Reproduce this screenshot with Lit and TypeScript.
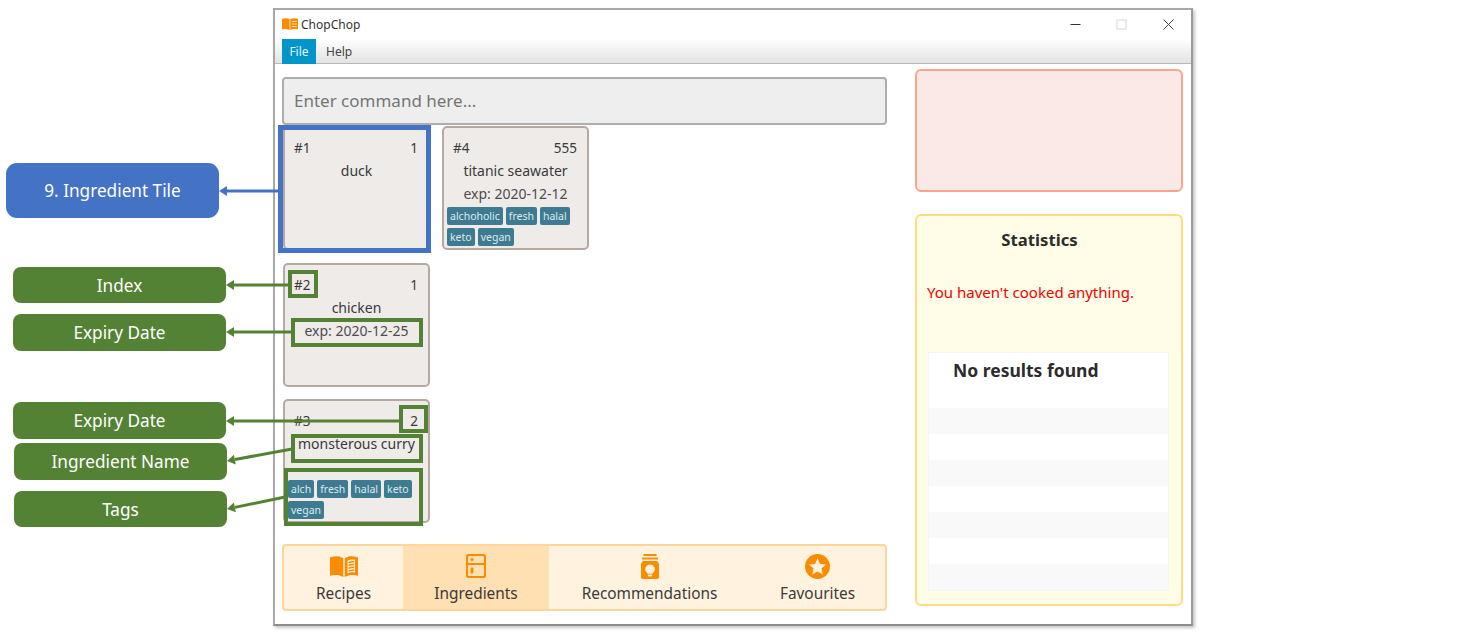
import { LitElement, html, css, svg } from "lit";
import { customElement } from "lit/decorators.js";

const bookIcon = (w: number, h: number) => html`<svg width=${w} height=${h} viewBox="0 0 28 21">
  <path fill="#fb8c00" d="M0 1.600C4.500-.4 9.500-.4 13.300 2.200V21C9.500 18.600 4.500 18.400 0 19.800Z"/>
  <path fill="#fb8c00" d="M14.700 2.200C18.500-.4 23.500-.4 28 1.600V19.800C23.500 18.400 18.500 18.600 14.700 21Z"/>
  <path fill="#fff3e0" d="M17.500 4.800C19.500 3.600 22.500 3.400 25 3.800V16.400C22.500 16 19.500 16.400 17.500 17.400Z"/>
  <path stroke="#fb8c00" stroke-width="1.500" fill="none" d="M18.500 6.800C20.500 5.800 22.200 5.600 24.200 5.800M18.500 9.600C20.500 8.600 22.200 8.400 24.200 8.600M18.500 12.400C20.500 11.400 22.200 11.200 24.200 11.400M18.500 15.200C20.500 14.200 22.200 14 24.200 14.200"/>
</svg>`;

const fridgeIcon = html`<svg width="20" height="24" viewBox="0 0 20 24">
  <rect width="20" height="24" rx="2.500" fill="#fb8c00"/>
  <rect x="2" y="2" width="16" height="7" rx="1" fill="#ffe0b2"/>
  <rect x="2" y="11" width="16" height="11" rx="1" fill="#ffe0b2"/>
  <circle cx="6" cy="5.500" r="1.600" fill="#fb8c00"/>
  <rect x="4.600" y="13.500" width="2.800" height="6" rx="1" fill="#fb8c00"/>
</svg>`;

const jarIcon = html`<svg width="18" height="25" viewBox="0 0 18 25">
  <rect x="2.500" width="13" height="2" fill="#fb8c00"/>
  <rect x="1" y="3.500" width="16" height="2" fill="#fb8c00"/>
  <path fill="#fb8c00" d="M2 7H16L18 9.500V23A2 2 0 0 1 16 25H2A2 2 0 0 1 0 23V9.500Z"/>
  <path fill="#fff3e0" d="M9 10.500A4.800 4.800 0 0 1 13.800 15.300C13.800 17.400 12.300 18.300 11.300 19.800H6.700C5.700 18.300 4.200 17.400 4.200 15.300A4.800 4.800 0 0 1 9 10.500Z"/>
  <rect x="7" y="20.600" width="4" height="1.800" fill="#fff3e0"/>
</svg>`;

const starIcon = html`<svg width="25" height="25" viewBox="0 0 25 25">
  <circle cx="12.500" cy="12.500" r="12.500" fill="#fb8c00"/>
  <path fill="#fff3e0" d="M12.500 4.400L15 10 21 10.600 16.500 14.600 17.800 20.600 12.500 17.500 7.200 20.600 8.500 14.600 4 10.600 10 10Z"/>
</svg>`;

interface Tile { idx: string; qty: string; name: string; exp?: string; tags?: string[]; }
const tiles: Tile[] = [
  { idx: "#1", qty: "1", name: "duck" },
  { idx: "#2", qty: "1", name: "chicken", exp: "exp: 2020-12-25" },
  { idx: "#3", qty: "2", name: "monsterous curry", tags: ["alch", "fresh", "halal", "keto", "vegan"] },
  { idx: "#4", qty: "555", name: "titanic seawater", exp: "exp: 2020-12-12", tags: ["alchoholic", "fresh", "halal", "keto", "vegan"] },
];

const tabs = [
  { label: "Recipes", icon: bookIcon(28, 21), active: false },
  { label: "Ingredients", icon: fridgeIcon, active: true },
  { label: "Recommendations", icon: jarIcon, active: false },
  { label: "Favourites", icon: starIcon, active: false },
];

const arrow = (x1: number, y1: number, x2: number, y2: number, color: string) => {
  const a = Math.atan2(y2 - y1, x2 - x1);
  const L = 8, W = 5;
  const bx = x2 - L * Math.cos(a), by = y2 - L * Math.sin(a);
  const nx = -Math.sin(a) * W, ny = Math.cos(a) * W;
  return svg`<line x1=${x1} y1=${y1} x2=${bx} y2=${by} stroke=${color} stroke-width="3"/>
    <polygon fill=${color} points="${x2},${y2} ${bx + nx},${by + ny} ${bx - nx},${by - ny}"/>`;
};
const box = (x1: number, y1: number, x2: number, y2: number, color: string, w: number) =>
  svg`<rect x=${x1 + w / 2} y=${y1 + w / 2} width=${x2 - x1 - w} height=${y2 - y1 - w} fill="none" stroke=${color} stroke-width=${w}/>`;

@customElement("app-root")
export class AppRoot extends LitElement {
  static styles = css`
    :host {
      display: flex;
      position: relative;
      width: 1468px;
      height: 634px;
      box-sizing: border-box;
      padding-top: 8px;
      background: #fff;
      overflow: hidden;
      font-family: "Noto Sans", "Open Sans", sans-serif;
      color: #3a3a3a;
    }
    .rail { width: 273px; flex: none; display: flex; flex-direction: column; }
    .callout {
      display: flex; align-items: center; justify-content: center;
      width: 213px; color: #fff; font-size: 17.2px; border-radius: 8px;
      background: #548235; margin-left: 13px; box-sizing: border-box;
    }
    .blue { background: #4472c4; margin: 155px 0 0 6px; height: 55px; border-radius: 11px; padding-bottom: 1px; }
    .c-index { margin-top: 49px; height: 36px; }
    .c-exp { margin-top: 11px; height: 37px; }
    .c-exp2 { margin-top: 51px; height: 37px; }
    .c-name { margin: 4px 0 0 14px; height: 37px; }
    .c-tags { margin: 11px 0 0 14px; height: 36px; }

    .window {
      width: 920px; height: 618px; flex: none; box-sizing: border-box;
      border: 2px solid #a8a8a8; border-bottom-color: #8c8c8c; border-right-color: #9a9a9a;
      box-shadow: 2px 2px 3px rgba(0,0,0,.22);
      display: flex; flex-direction: column; background: #fff;
    }
    .titlebar { height: 30px; flex: none; box-sizing: border-box; padding: 0 0 2px 7px; display: flex; align-items: center; font-size: 12px; color: #333; }
    .titlebar svg.logo { margin-right: 3px; }
    .controls { margin-left: auto; display: flex; align-items: center; }
    .ctl { width: 46px; display: flex; justify-content: center; }
    .ctl.close { margin-left: 1px; }
    .menubar {
      height: 24px; flex: none; box-sizing: border-box; display: flex; padding-left: 7px;
      background: linear-gradient(#fdfdfd, #e3e3e3); border-bottom: 1px solid #b8b8b8;
      font-size: 12px; color: #444;
    }
    .menu { display: flex; align-items: center; padding: 0 10px; }
    .menu.on { background: #0096c9; color: #e6f5fb; width: 34px; padding: 0; margin: -1px 0 -1px; box-sizing: border-box; justify-content: center; }
    .body { flex: 1; display: flex; min-height: 0; }
    .left { width: 612px; flex: none; box-sizing: border-box; padding: 13px 0 13px 7px; display: flex; flex-direction: column; }
    .cmd {
      height: 48px; flex: none; box-sizing: border-box; background: #eee; border: 2px solid #adadad;
      border-radius: 4px; padding: 0 0 1px 10px; display: flex; align-items: center;
      font-size: 17px; color: #757575;
    }
    .grid {
      flex: 1; margin: 1px 0 0 1px; display: grid; grid-auto-flow: column;
      grid-template-rows: repeat(3, 124px); grid-auto-columns: 147px; gap: 12.5px 12px; align-content: start;
    }
    .tile {
      box-sizing: border-box; background: #efebe9; border: 2px solid #b8a8a2; border-radius: 5px;
      padding: 0 3px; display: flex; flex-direction: column;
    }
    .head { display: flex; justify-content: space-between; padding: 10px 7px 0 6px; height: 20px; line-height: 20px; font-size: 13.5px; }
    .name { height: 23px; padding-top: 1px; line-height: 23px; text-align: center; font-size: 14px; white-space: nowrap; }
    .exp { height: 24px; margin-bottom: 1px; line-height: 24px; text-align: center; font-size: 14px; color: #4c4c4c; white-space: nowrap; }
    .tags { display: flex; flex-wrap: wrap; gap: 3px; }
    .tag {
      height: 18px; line-height: 18px; padding: 0 3px; background: #3e7b91; color: #dce9ee;
      font-size: 10.5px; border-radius: 2px; white-space: nowrap;
    }
    .tabbar {
      height: 67px; flex: none; box-sizing: border-box; border: 2px solid #ffd699; border-radius: 4px;
      background: #fff3e0; display: grid; grid-template-columns: 119px 146px 201px 1fr; overflow: hidden;
    }
    .tab { display: flex; flex-direction: column; align-items: center; padding-top: 7px; }
    .tab.on { background: #ffe0b2; }
    .ico { height: 26px; display: flex; align-items: center; justify-content: center; }
    .lbl { margin-top: 4px; font-size: 15.4px; line-height: 22px; white-space: nowrap; color: #3a3a3a; }
    .right { width: 268px; flex: none; margin-left: 28px; padding-top: 5px; display: flex; flex-direction: column; }
    .alert { height: 123px; box-sizing: border-box; background: #fbe9e7; border: 2px solid #ffa48c; border-radius: 6px; }
    .stats {
      margin-top: 22px; height: 392px; box-sizing: border-box; background: #fffde7; border: 2px solid #ffdb82;
      border-radius: 6px; padding: 12px 12px 0 11px; display: flex; flex-direction: column;
    }
    .stitle { padding-right: 18px; text-align: center; font-weight: 700; font-size: 16.7px; line-height: 24px; color: #2c2c2c; }
    .msg { margin-top: 28px; height: 24px; line-height: 24px; font-size: 15px; color: #f40000; white-space: nowrap; margin-left: -1px; }
    .list { margin-top: 48px; width: 241px; border: 1px solid #f5f5f5; box-sizing: border-box; background: #fff; }
    .r0 { height: 55px; padding-left: 24px; font-weight: 700; font-size: 17.5px; line-height: 34px; color: #2c2c2c; white-space: nowrap; }
    .r { height: 26px; background: #fff; }
    .r.alt { background: #f9f9f9; }
    .overlay { position: absolute; left: 0; top: 0; pointer-events: none; }
  `;

  render() {
    return html`
      <div class="rail">
        <div class="callout blue">9. Ingredient Tile</div>
        <div class="callout c-index">Index</div>
        <div class="callout c-exp">Expiry Date</div>
        <div class="callout c-exp2">Expiry Date</div>
        <div class="callout c-name">Ingredient Name</div>
        <div class="callout c-tags">Tags</div>
      </div>
      <div class="window">
        <div class="titlebar">
          <svg class="logo" width="16" height="12" viewBox="0 0 16 12">
            <path fill="#fb8c00" d="M0 .8C3-.2 5.500 0 7.600 1V12C5.500 11 3 10.800 0 11.500Z"/>
            <path fill="#fb8c00" d="M8.300 1C10.500 0 13-.2 16 .8V11.500C13 10.800 10.500 11 8.300 12Z"/>
            <path stroke="#ffe0b2" stroke-width="1" fill="none" d="M10 3.500H14.500M10 6H14.500M10 8.500H14.500"/>
          </svg>
          ChopChop
          <div class="controls">
            <div class="ctl"><svg width="11" height="11" viewBox="0 0 11 11"><path d="M0.500 5.500H10.500" stroke="#333" stroke-width="1"/></svg></div>
            <div class="ctl"><svg width="11" height="11" viewBox="0 0 11 11"><rect x="1" y="1" width="9" height="9" fill="none" stroke="#d8d8d8"/></svg></div>
            <div class="ctl close"><svg width="11" height="11" viewBox="0 0 11 11"><path d="M.5.500L10.500 10.500M10.500.500L.5 10.500" stroke="#444" stroke-width="1"/></svg></div>
          </div>
        </div>
        <div class="menubar">
          <div class="menu on">File</div>
          <div class="menu">Help</div>
        </div>
        <div class="body">
          <div class="left">
            <div class="cmd">Enter command here...</div>
            <div class="grid">
              ${tiles.map(t => html`
                <div class="tile">
                  <div class="head"><span>${t.idx}</span><span>${t.qty}</span></div>
                  <div class="name">${t.name}</div>
                  <div class="exp">${t.exp ?? ""}</div>
                  <div class="tags">${(t.tags ?? []).map(g => html`<span class="tag">${g}</span>`)}</div>
                </div>`)}
            </div>
            <div class="tabbar">
              ${tabs.map(t => html`
                <div class="tab ${t.active ? "on" : ""}">
                  <div class="ico">${t.icon}</div>
                  <div class="lbl">${t.label}</div>
                </div>`)}
            </div>
          </div>
          <div class="right">
            <div class="alert"></div>
            <div class="stats">
              <div class="stitle">Statistics</div>
              <div class="msg">You haven't cooked anything.</div>
              <div class="list">
                <div class="r0">No results found</div>
                ${[1, 0, 1, 0, 1, 0, 1].map(a => html`<div class="r ${a ? "alt" : ""}"></div>`)}
              </div>
            </div>
          </div>
        </div>
      </div>
      <svg class="overlay" width="1468" height="634">
        ${box(278, 125, 431, 253, "#4472c4", 5)}
        ${box(288, 270, 318, 298, "#548235", 4)}
        ${box(291, 318, 423, 347, "#548235", 4)}
        ${box(399, 405, 428, 433, "#548235", 4)}
        ${box(291, 434, 423, 463, "#548235", 4)}
        ${box(284, 468, 423, 526, "#548235", 4)}
        ${arrow(279, 191, 219, 191, "#4472c4")}
        ${arrow(289, 285, 226, 285, "#548235")}
        ${arrow(292, 332, 226, 332, "#548235")}
        ${arrow(400, 421, 226, 421, "#548235")}
        ${arrow(292, 449, 227, 461, "#548235")}
        ${arrow(285, 497, 227, 509, "#548235")}
      </svg>
    `;
  }
}
